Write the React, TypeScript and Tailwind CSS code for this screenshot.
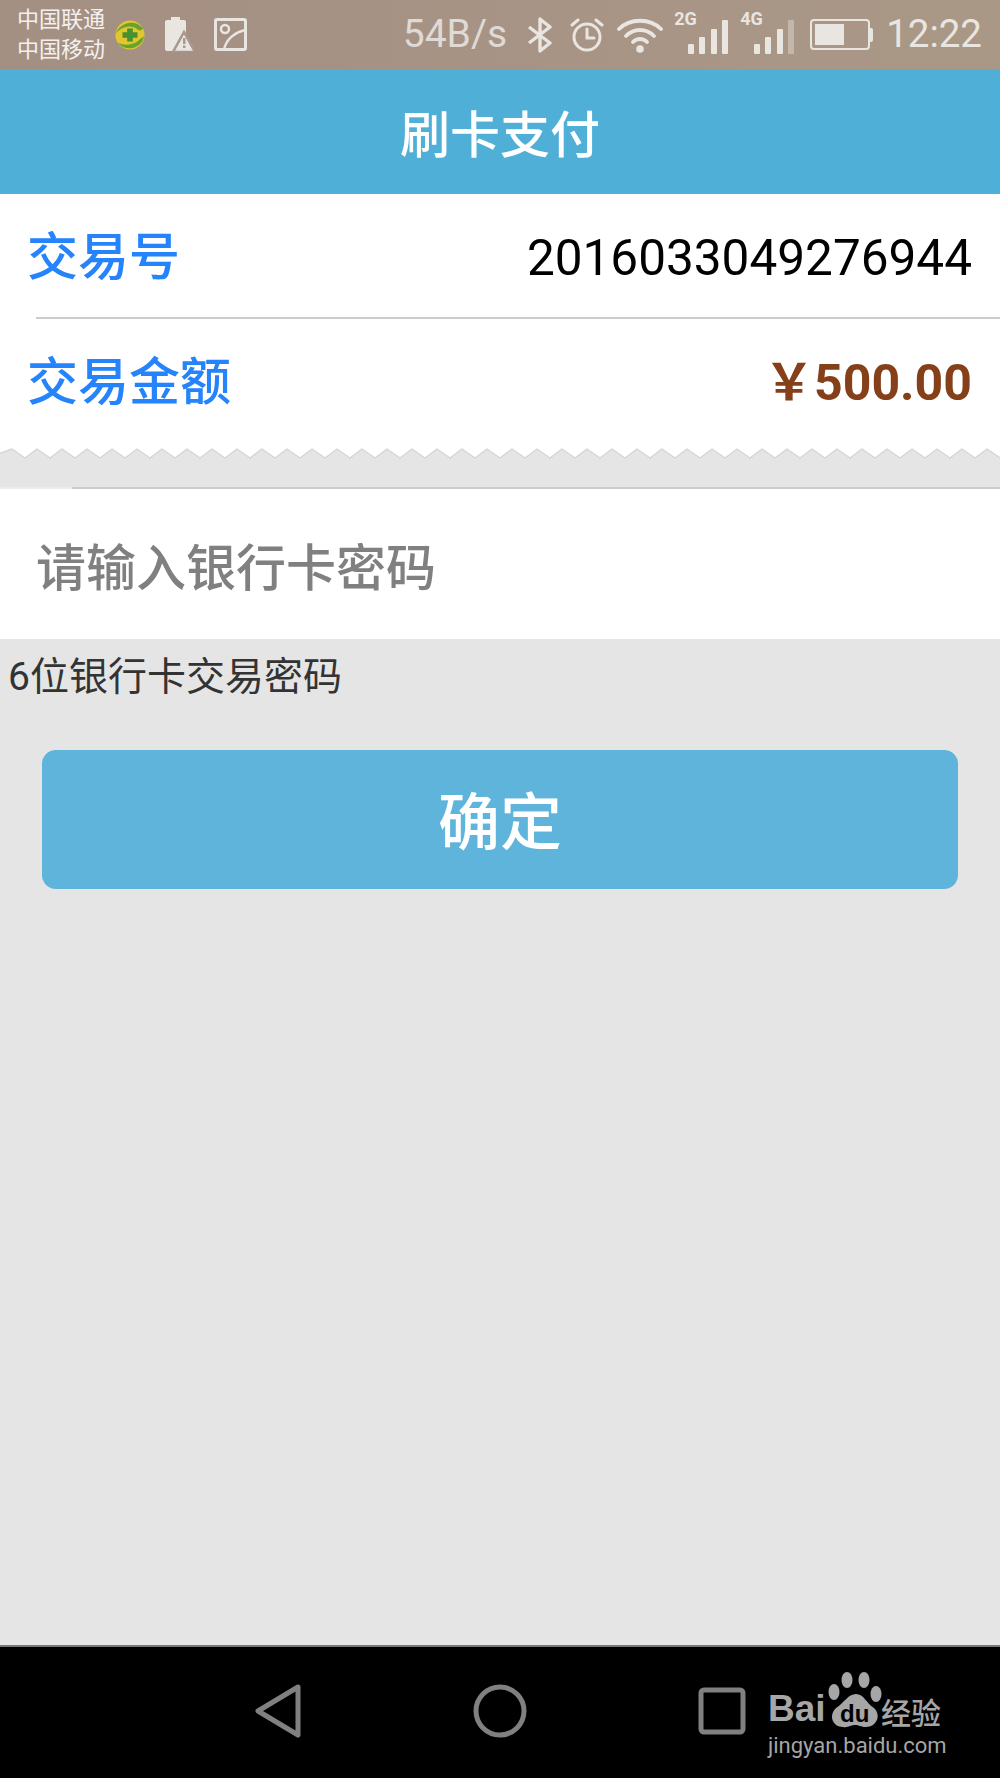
const cjk = "font-['Roboto','Noto_Sans_CJK_SC',sans-serif]";

function Zigzag() {
  const pts: string[] = ["-13,10"];
  for (let i = 0; i < 42; i++) {
    pts.push(`${12 + i * 25},1`);
    pts.push(`${25 + i * 25},10`);
  }
  const line = pts.join(" ");
  return (
    <svg width="1000" height="14" viewBox="0 0 1000 14" className="block bg-white">
      <polygon points={`${line} 1000,14 0,14`} fill="#e5e5e5" />
      <polyline points={line} fill="none" stroke="#d6d6d6" strokeWidth="1.500" strokeLinejoin="round" />
    </svg>
  );
}

function SafeIcon() {
  return (
    <svg width="30" height="30" viewBox="0 0 32 32">
      <circle cx="16" cy="16" r="15.500" fill="#e2c531" />
      <path d="M1 14C5 3 21-2 30 9C28 11 26 12 24 10C18 5 8 6 1 14Z" fill="#6aa32c" />
      <path d="M3 24C10 28 21 27 27 20C28 19 30 19 31 17C30 29 12 36 3 24Z" fill="#6aa32c" />
      <path d="M13 9h6v4h5v6h-5v4h-6v-4H8v-6h5z" fill="#45902f" />
    </svg>
  );
}

function BatteryWarn() {
  return (
    <svg width="30" height="35" viewBox="0 0 30 35" fill="#e9e5e1">
      <path d="M7 0h9v3h4a2 2 0 0 1 2 2v29H3a2 2 0 0 1-2-2V5a2 2 0 0 1 2-2h4z" />
      <path d="M20 15l11 20H9z" fill="#e9e5e1" stroke="#a8978a" strokeWidth="2.500" />
      <path d="M19 21h2.400v6H19zM19 28.500h2.400v2.500H19z" fill="#a8978a" />
    </svg>
  );
}

function PictureIcon() {
  return (
    <svg width="33" height="33" viewBox="0 0 33 33" fill="none" stroke="#e9e5e1" strokeWidth="3">
      <rect x="1.500" y="1.500" width="30" height="30" rx="1.500" />
      <circle cx="11" cy="11" r="4" strokeWidth="2.500" />
      <path d="M10 32C12 21 21 14 32 12" strokeWidth="2.500" />
    </svg>
  );
}

function Bluetooth() {
  return (
    <svg width="26" height="36" viewBox="0 0 26 36" fill="none" stroke="#e9e5e1" strokeWidth="3.400" strokeLinejoin="round">
      <path d="M2 10l21 16-10 8V2l10 8L2 26" />
    </svg>
  );
}

function Alarm() {
  return (
    <svg width="34" height="36" viewBox="0 0 34 36" fill="none" stroke="#e9e5e1" strokeWidth="3" strokeLinecap="round">
      <circle cx="17" cy="20" r="13" />
      <path d="M17 12v9h7M2 8l6-5M32 8l-6-5" />
    </svg>
  );
}

function Wifi() {
  return (
    <svg width="46" height="36" viewBox="0 0 46 36" fill="none" stroke="#e9e5e1" strokeWidth="3.800" strokeLinecap="round">
      <path d="M2 12C13 1 33 1 44 12M9 19C17 11 29 11 37 19M16 25C20 21 26 21 30 25" />
      <circle cx="23" cy="32" r="3.800" fill="#e9e5e1" stroke="none" />
    </svg>
  );
}

function Signal({ label, dim }: { label: string; dim?: boolean }) {
  return (
    <div className="relative h-[40px] w-[54px]">
      <span className="absolute left-0 top-[-2px] font-['Roboto',sans-serif] text-[18px] font-bold leading-[14px] text-[#e9e5e1]">{label}</span>
      <div className="absolute bottom-0 right-0 flex items-end gap-[5.500px]">
        <div className="h-[10px] w-[6px] rounded-[1px] bg-[#e9e5e1]" />
        <div className="h-[17px] w-[6px] rounded-[1px] bg-[#e9e5e1]" />
        <div className="h-[25px] w-[6px] rounded-[1px] bg-[#e9e5e1]" />
        <div className={`h-[34px] w-[6px] rounded-[1px] ${dim ? "bg-[#c3b7ac]" : "bg-[#e9e5e1]"}`} />
      </div>
    </div>
  );
}

function Battery() {
  return (
    <div className="flex items-center">
      <div className="h-[31px] w-[60px] rounded-[4px] border-2 border-[#e9e5e1] p-[3px]">
        <div className="h-full w-[29px] bg-[#e9e5e1]" />
      </div>
      <div className="h-[14px] w-[3px] rounded-r-[2px] bg-[#e9e5e1]" />
    </div>
  );
}

function StatusBar() {
  return (
    <div className={`flex h-[69px] items-center justify-between bg-gradient-to-r from-[#a48f83] to-[#aa9887] pl-[17px] pr-[18px] ${cjk}`}>
      <div className="flex items-center">
        <div className="text-[22px] leading-[30px] text-[#f3f0ee]">
          <div>中国联通</div>
          <div>中国移动</div>
        </div>
        <div className="ml-[10px] mt-[1px]"><SafeIcon /></div>
        <div className="ml-[19px]"><BatteryWarn /></div>
        <div className="ml-[20px]"><PictureIcon /></div>
      </div>
      <div className="flex items-center">
        <span className="text-[39px] leading-none text-[#dfdad5]">54B/s</span>
        <div className="ml-[20px]"><Bluetooth /></div>
        <div className="ml-[17px]"><Alarm /></div>
        <div className="ml-[13px]"><Wifi /></div>
        <div className="ml-[11px] mb-[1px]"><Signal label="2G" /></div>
        <div className="ml-[12px] mb-[1px]"><Signal label="4G" dim /></div>
        <div className="ml-[16px]"><Battery /></div>
        <span className="ml-[13px] text-[38.500px] leading-none text-[#e9e5e1]">12:22</span>
      </div>
    </div>
  );
}

export default function App() {
  return (
    <div className={`flex h-[1778px] w-[1000px] flex-col overflow-hidden bg-[#e5e5e5] ${cjk}`}>
      <StatusBar />
      <header className="flex h-[125px] items-center justify-center bg-[#4fafd7] pt-[10px] text-[50px] font-medium text-white">刷卡支付</header>
      <section className="bg-white">
        <div className="flex h-[123px] items-center justify-between pl-[27px] pr-[28px] pt-[5px]">
          <span className="text-[51px] font-medium text-[#2583fb]">交易号</span>
          <span className="text-[49.500px] text-black">2016033049276944</span>
        </div>
        <div className="ml-[36px] h-[2px] bg-[#cccccc]" />
        <div className="flex h-[129px] items-center justify-between pl-[27px] pr-[28px]">
          <span className="text-[51px] font-medium text-[#2583fb]">交易金额</span>
          <span className="text-[50px] font-bold text-[#85401a]">￥500.00</span>
        </div>
      </section>
      <Zigzag />
      <div className="h-[25px]" />
      <div className="flex h-[2px]">
        <div className="w-[72px] bg-[#ececec]" />
        <div className="flex-1 bg-[#cccccc]" />
      </div>
      <div className="flex h-[150px] items-center bg-white pl-[36px] pt-[10px] text-[50px] font-medium text-[#808080]">请输入银行卡密码</div>
      <div className="mt-[13px] pl-[8px] text-[39px] leading-[50px] text-[#333333]">6位银行卡交易密码</div>
      <button className="mx-[42px] mt-[48px] flex h-[139px] items-center justify-center rounded-[14px] bg-[#5eb4da] pt-[8px] text-[62px] font-medium text-white">确定</button>
      <div className="flex-1" />
      <footer className="relative h-[133px] border-t-2 border-[#777777] bg-black">
        <div className="flex h-full items-center pl-[254px] pb-[4px]">
          <svg width="48" height="56" viewBox="0 0 48 56" fill="none" stroke="#808080" strokeWidth="5" strokeLinejoin="round">
            <path d="M44 4L4 28l40 24z" />
          </svg>
          <svg className="ml-[171px]" width="54" height="54" viewBox="0 0 54 54" fill="none" stroke="#808080" strokeWidth="5">
            <circle cx="27" cy="27" r="24" />
          </svg>
          <svg className="ml-[171px]" width="48" height="48" viewBox="0 0 48 48" fill="none" stroke="#808080" strokeWidth="5">
            <rect x="3" y="3" width="42" height="42" rx="3" />
          </svg>
        </div>
        <div className="absolute left-[768px] top-[24px] h-[90px] w-[178px] text-[#a6a6a6]">
          <span className="absolute left-0 top-[18px] font-['Liberation_Sans',sans-serif] text-[37px] font-bold leading-[40px]">Bai</span>
          <svg className="absolute left-[56px] top-[1px]" width="68" height="56" viewBox="0 0 68 56" fill="#a6a6a6">
            <ellipse cx="23" cy="8" rx="5.500" ry="8" />
            <ellipse cx="40" cy="8" rx="5.500" ry="8" />
            <ellipse cx="10" cy="20" rx="5.500" ry="8" />
            <ellipse cx="52" cy="22" rx="5.500" ry="8" />
            <path d="M32 22c8 0 10 9 18 14 8 8 2 19-8 19-5 0-7-2-11-2s-7 3-12 2C9 55 4 44 12 36c8-5 12-14 20-14z" />
          </svg>
          <span className="absolute left-[72px] top-[31px] font-['Liberation_Sans',sans-serif] text-[24px] font-bold leading-[24px] text-black">du</span>
          <span className="absolute left-[113px] top-[25px] whitespace-nowrap text-[30px] font-medium leading-[36px]">经验</span>
          <span className="absolute left-0 top-[62px] whitespace-nowrap font-['Roboto',sans-serif] text-[22px] leading-[26px]">jingyan.baidu.com</span>
        </div>
      </footer>
    </div>
  );
}
